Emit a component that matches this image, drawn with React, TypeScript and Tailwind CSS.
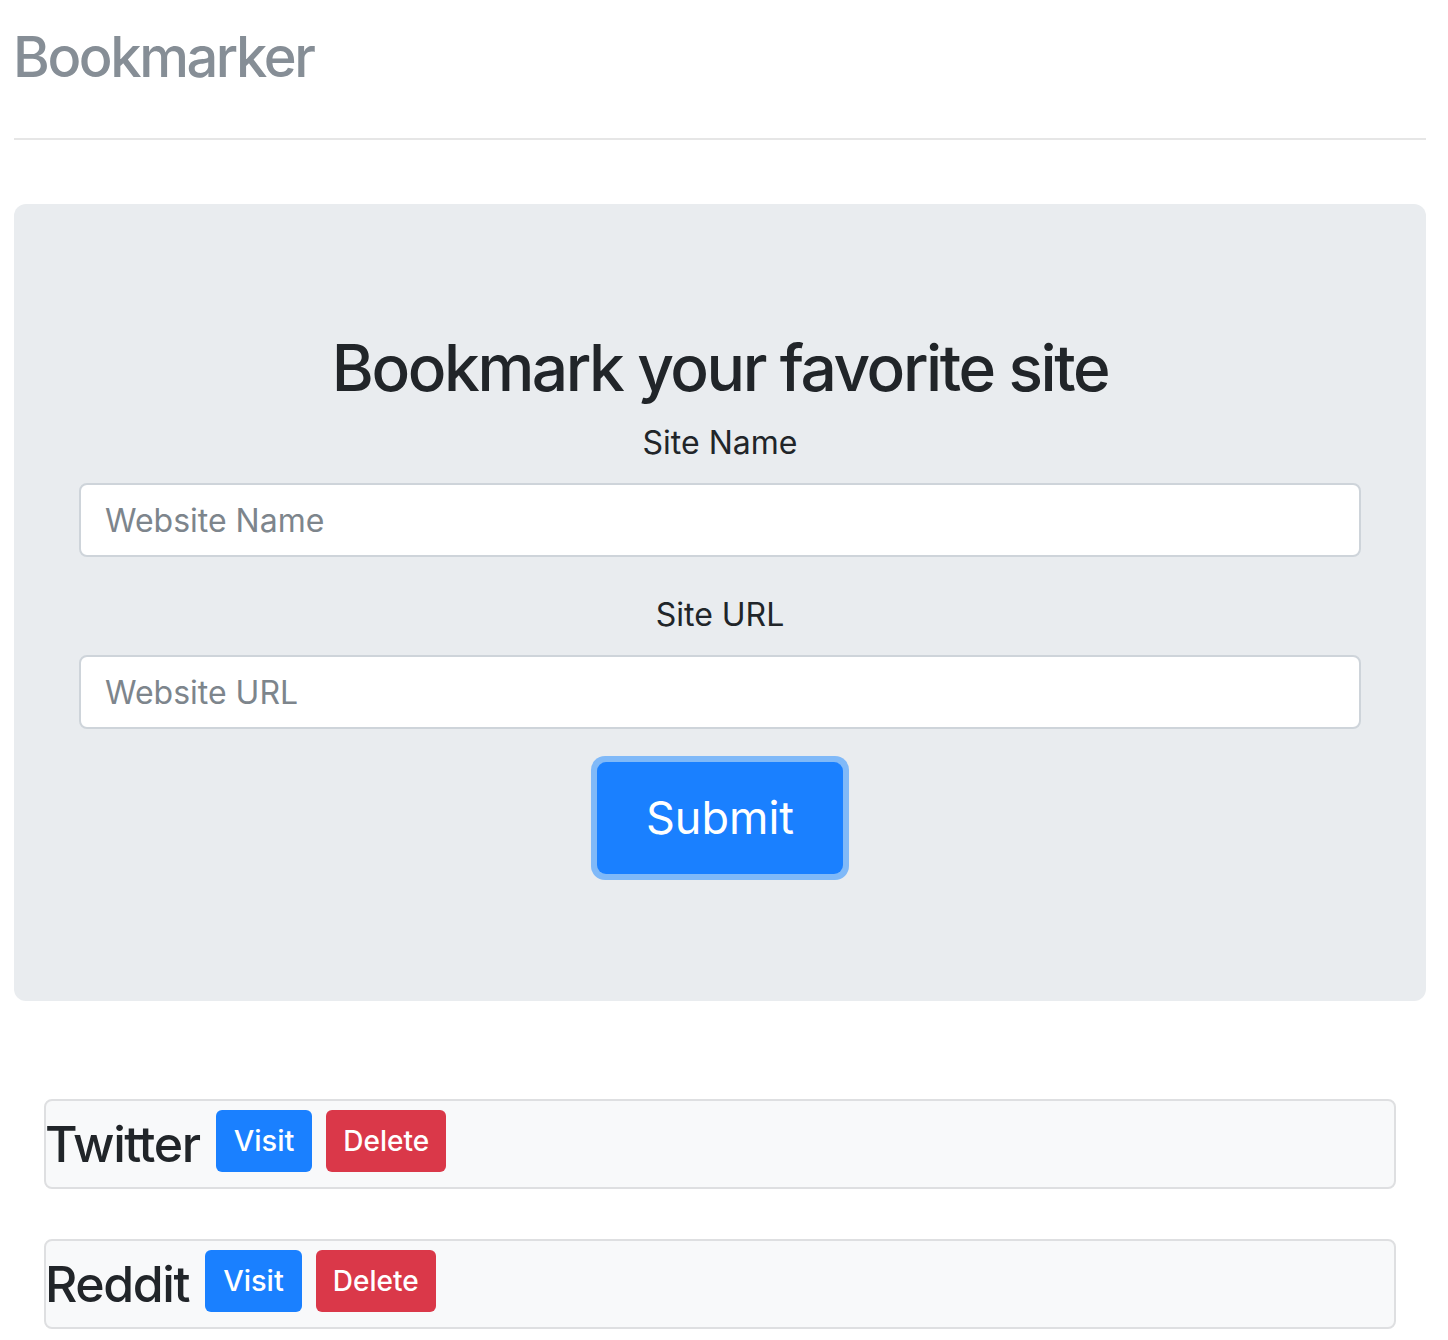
import { useState } from 'react';

interface Bookmark {
  name: string;
  url: string;
}

const initialBookmarks: Bookmark[] = [
  { name: 'Twitter', url: 'https://twitter.com' },
  { name: 'Reddit', url: 'https://reddit.com' },
];

export default function App() {
  const [bookmarks, setBookmarks] = useState<Bookmark[]>(initialBookmarks);
  const [siteName, setSiteName] = useState('');
  const [siteUrl, setSiteUrl] = useState('');

  const handleSubmit = (e: React.FormEvent) => {
    e.preventDefault();
    if (!siteName || !siteUrl) return;
    setBookmarks([...bookmarks, { name: siteName, url: siteUrl }]);
    setSiteName('');
    setSiteUrl('');
  };

  const removeBookmark = (url: string) => {
    setBookmarks(bookmarks.filter((b) => b.url !== url));
  };

  return (
    <div className="min-h-[1340px] bg-white pl-[14px] pr-[22px] font-['Inter','Noto_Sans',sans-serif] text-[#212529]">
      {/* Başlık */}
      <div className="pt-[24px]">
        <h3 className="-ml-[1px] text-[56px] leading-[67px] font-medium text-[#868e96] tracking-[-2.4px]">Bookmarker</h3>
      </div>
      <div className="mt-[47px] h-[2px] bg-[#e6e6e6]" />

      {/* Form alanı */}
      <div className="mt-[64px] h-[797px] rounded-[12px] bg-[#e9ecef] px-[65px] pt-[125px]">
        <h2 className="text-center text-[64px] leading-[77px] font-medium tracking-[-2.4px]">Bookmark your favorite site</h2>
        <form onSubmit={handleSubmit} className="flex flex-col items-center">
          <label className="mt-[14px] text-[32px] leading-[45px]">Site Name</label>
          <input
            type="text"
            value={siteName}
            onChange={(e) => setSiteName(e.target.value)}
            placeholder="Website Name"
            className="mt-[18px] h-[74px] w-full rounded-[8px] border-2 border-[#ced4da] bg-white px-[24px] text-[32px] text-[#495057] placeholder:text-[#7d858c] outline-none"
          />
          <label className="mt-[35px] text-[32px] leading-[45px]">Site URL</label>
          <input
            type="text"
            value={siteUrl}
            onChange={(e) => setSiteUrl(e.target.value)}
            placeholder="Website URL"
            className="mt-[18px] h-[74px] w-full rounded-[8px] border-2 border-[#ced4da] bg-white px-[24px] text-[32px] text-[#495057] placeholder:text-[#7d858c] outline-none"
          />
          <div className="mt-[27px] rounded-[14px] bg-[#80b9f8] p-[6px]">
            <button
              type="submit"
              className="h-[112px] w-[246px] rounded-[9px] bg-[#1a80ff] text-[45px] text-white"
            >
              Submit
            </button>
          </div>
        </form>
      </div>

      {/* Yer imleri listesi */}
      <div className="mt-[98px] flex flex-col gap-[50px] px-[30px]">
        {bookmarks.map((b) => (
          <div
            key={b.url}
            className="flex h-[90px] items-center gap-[14px] rounded-[8px] border-2 border-[#dedfe1] bg-[#f8f9fa]"
          >
            <h3 className="-ml-[1px] mr-[2px] text-[50px] leading-[60px] font-medium tracking-[-1.4px]">{b.name}</h3>
            <a
              href={b.url}
              target="_blank"
              rel="noreferrer"
              className="-mt-[6px] flex h-[62px] items-center rounded-[6px] bg-[#1a80ff] px-[18px] text-[29px] font-medium text-white"
            >
              Visit
            </a>
            <button
              onClick={() => removeBookmark(b.url)}
              className="-mt-[6px] flex h-[62px] items-center rounded-[6px] bg-[#da3849] px-[17px] text-[28px] font-medium text-white"
            >
              Delete
            </button>
          </div>
        ))}
      </div>
    </div>
  );
}
